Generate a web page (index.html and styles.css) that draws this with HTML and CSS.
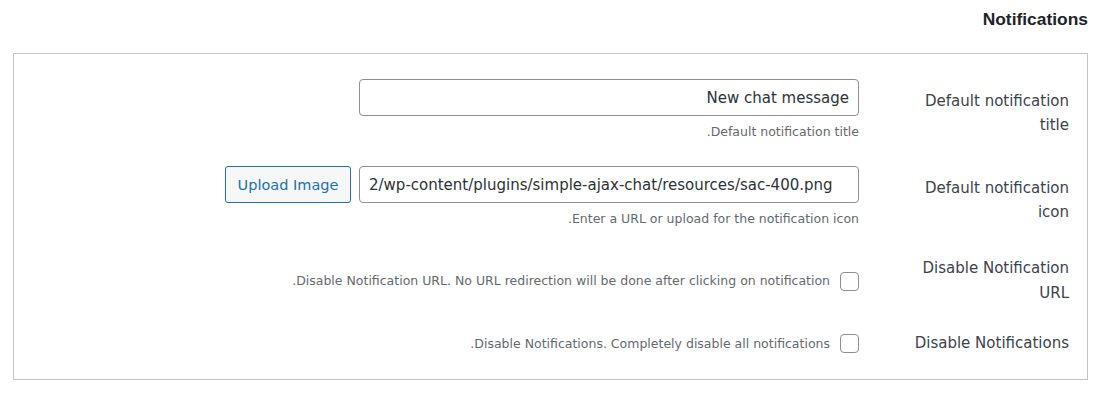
FILE: index.html
```html
<!DOCTYPE html>
<html dir="rtl">
<head>
	<meta charset="utf-8">
	<title>Notifications</title>
	<link rel="stylesheet" href="styles.css">
</head>
<body>
	<h2 class="section_title">Notifications</h2>
	<div class="settings_box">
		<div class="setting_row">
			<div class="setting_label">Default notification title</div>
			<div class="setting_field">
				<input class="text_input" type="text" value="New chat message">
				<p class="description">Default notification title.</p>
			</div>
		</div>
		<div class="setting_row">
			<div class="setting_label">Default notification icon</div>
			<div class="setting_field">
				<div class="upload_line">
					<input class="text_input url_input" type="text" dir="ltr" value="2/wp-content/plugins/simple-ajax-chat/resources/sac-400.png">
					<button class="upload_button" type="button">Upload Image</button>
				</div>
				<p class="description">Enter a URL or upload for the notification icon.</p>
			</div>
		</div>
		<div class="setting_row check_row">
			<div class="setting_label">Disable Notification URL</div>
			<label class="check_field">
				<input class="check_box" type="checkbox">
				<span class="description">Disable Notification URL. No URL redirection will be done after clicking on notification.</span>
			</label>
		</div>
		<div class="setting_row check_row">
			<div class="setting_label">Disable Notifications</div>
			<label class="check_field">
				<input class="check_box" type="checkbox">
				<span class="description">Disable Notifications. Completely disable all notifications.</span>
			</label>
		</div>
	</div>
</body>
</html>
```

FILE: styles.css
```css
body
{
	margin: 0;
	padding: 9px 13px 0 13px;
	background-color: white;
	font-family: "DejaVu Sans", sans-serif;
	color: #3c434a;
}
.section_title
{
	margin: 0 0 24px 0;
	font-family: "Liberation Sans", Arial, sans-serif;
	font-size: 17.4px;
	line-height: 20px;
	font-weight: bold;
	color: #1d2327;
}
.settings_box
{
	border: 1px solid #c3c4c7;
	padding: 12px 18px 14px 18px;
}
.setting_row
{
	display: grid;
	grid-template-columns: 170px 1fr;
	column-gap: 40px;
	align-items: start;
	padding: 13px 0 11px 0;
}
.check_row
{
	align-items: center;
	padding: 16px 0 9px 0;
}
.setting_label
{
	font-size: 15px;
	line-height: 24px;
	color: #3c434a;
}
.setting_row .setting_label
{
	padding-top: 10px;
}
.check_row .setting_label
{
	padding-top: 0;
	line-height: 25px;
}
.setting_field
{
	display: flex;
	flex-direction: column;
	align-items: flex-start;
}
.text_input
{
	box-sizing: border-box;
	width: 500px;
	height: 37px;
	margin: 0;
	padding: 0 9px;
	border: 1px solid #8c8f94;
	border-radius: 4px;
	background: white;
	font-family: "DejaVu Sans", sans-serif;
	font-size: 15px;
	color: #2c3338;
}
.upload_line
{
	display: flex;
	gap: 8px;
}
.upload_button
{
	box-sizing: border-box;
	width: 126px;
	height: 37px;
	margin: 0;
	padding: 0;
	border: 1px solid #2271b1;
	border-radius: 3px;
	background: #f6f7f7;
	font-family: "DejaVu Sans", sans-serif;
	font-size: 14.5px;
	color: #2271b1;
}
.description
{
	margin: 6px 0 0 0;
	font-size: 12.5px;
	line-height: 20px;
	color: #646970;
}
.check_field
{
	display: flex;
	align-items: center;
	gap: 10px;
}
.check_field .description
{
	margin: 0;
}
.check_box
{
	appearance: none;
	box-sizing: border-box;
	width: 19px;
	height: 19px;
	margin: 0;
	border: 1px solid #8c8f94;
	border-radius: 4px;
	background: white;
}
```
